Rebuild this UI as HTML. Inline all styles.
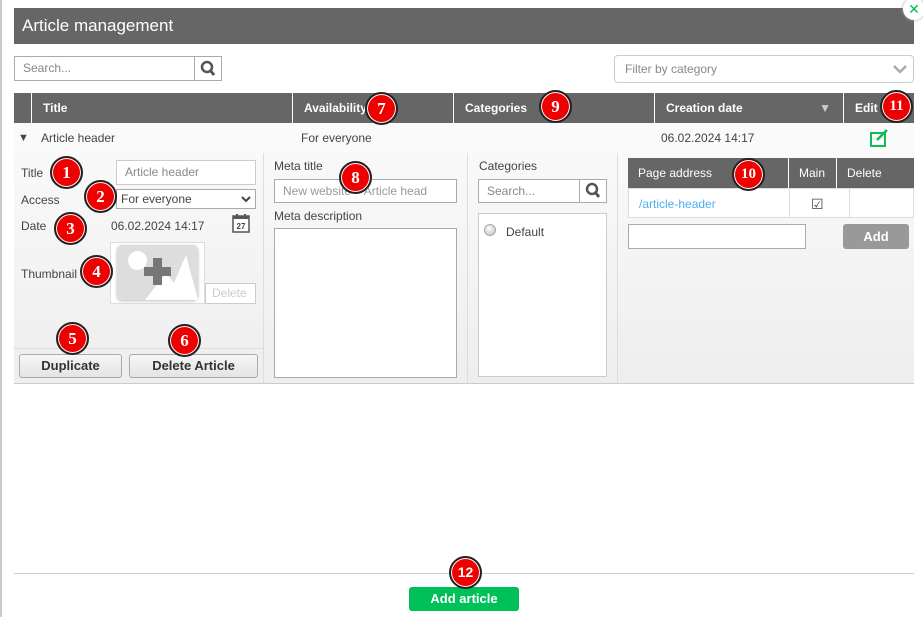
<!DOCTYPE html>
<html><head><style>
*{box-sizing:border-box;margin:0;padding:0}
body{width:923px;height:617px;background:#fff;font-family:"Liberation Sans",sans-serif;position:relative;overflow:hidden;font-size:12px;color:#444}
.a{position:absolute}
.hd{background:#666;color:#fff}
.th{position:absolute;top:0;height:30px;line-height:30px;font-weight:bold;font-size:12px;color:#fff;border-left:1px solid #fff;padding-left:11px}
.b{position:absolute;width:33px;height:33px;border-radius:50%;background:#e00;border:2px solid #222;box-shadow:0 0 0 1px #fff inset;color:#fff;font:bold 17px "Liberation Serif",serif;text-align:center;line-height:29px;z-index:5}
.in{position:absolute;background:#fff;border:1px solid #aaa;color:#888;font-size:12px;padding-left:8px}
.btn{position:absolute;border:1px solid #aaa;border-radius:3px;background:linear-gradient(#f6f6f6,#e4e4e4);font-weight:bold;font-size:13px;color:#333;text-align:center}
</style></head><body>
<div class="a" style="left:0;top:0;width:2px;height:617px;background:#ccc"></div>
<div class="a hd" style="left:14px;top:8px;width:900px;height:36px;font-size:17px;line-height:36px;padding-left:8px">Article management</div>
<div class="a" style="left:903px;top:-2px;width:22px;height:22px;border-radius:50%;background:#fff;box-shadow:0 0 3px #aaa;color:#0b5;font-size:14px;text-align:center;line-height:22px">✕</div>
<div class="in" style="left:14px;top:56px;width:181px;height:25px;line-height:23px">Search...</div>
<div class="in" style="left:194px;top:56px;width:28px;height:25px;padding:0">
<svg width="26" height="23"><circle cx="12" cy="10" r="5" fill="none" stroke="#555" stroke-width="2.5"/><line x1="15" y1="13" x2="19" y2="18" stroke="#555" stroke-width="3"/></svg></div>
<div class="in" style="left:614px;top:55px;width:300px;height:28px;line-height:26px;border-radius:4px;border-color:#ccc;padding-left:10px">Filter by category<svg class="a" style="right:6px;top:8px" width="14" height="10"><polyline points="1,2 7,8 13,2" fill="none" stroke="#aaa" stroke-width="2.5"/></svg></div>
<div class="a hd" style="left:14px;top:93px;width:900px;height:30px">
<div class="th" style="left:17px;width:261px">Title</div>
<div class="th" style="left:278px;width:161px">Availability</div>
<div class="th" style="left:439px;width:201px">Categories</div>
<div class="th" style="left:640px;width:189px">Creation date<span style="position:absolute;right:12px;color:#ccc;font-size:12px">▼</span></div>
<div class="th" style="left:829px;width:71px">Edit</div>
</div>
<div class="a" style="left:14px;top:123px;width:900px;height:30px;background:#fafafa;line-height:30px;font-size:12px;color:#444">
<span class="a" style="left:4px;font-size:11px">▼</span><span class="a" style="left:27px">Article header</span>
<span class="a" style="left:287px">For everyone</span><span class="a" style="left:647px">06.02.2024 14:17</span>
<svg class="a" style="left:855px;top:5px" width="22" height="20"><rect x="2" y="5" width="14" height="13" fill="none" stroke="#1b5" stroke-width="2"/><line x1="8" y1="12" x2="18" y2="2" stroke="#1b5" stroke-width="2.5"/></svg>
</div>
<div class="a" style="left:14px;top:153px;width:900px;height:231px;background:linear-gradient(#f9f9f9,#eee);border-bottom:1px solid #ccc"></div>
<div class="a" style="left:263px;top:153px;width:1px;height:230px;background:#ddd"></div>
<div class="a" style="left:467px;top:153px;width:1px;height:230px;background:#ddd"></div>
<div class="a" style="left:617px;top:153px;width:1px;height:230px;background:#ddd"></div>
<div class="a" style="left:14px;top:348px;width:249px;height:1px;background:#ddd"></div>
<div class="a" style="left:21px;top:166px">Title</div>
<div class="a" style="left:21px;top:193px">Access</div>
<div class="a" style="left:21px;top:219px">Date</div>
<div class="a" style="left:21px;top:267px">Thumbnail</div>
<div class="in" style="left:116px;top:160px;width:140px;height:25px;line-height:23px;border-color:#ccc">Article header</div>
<div class="in" style="left:116px;top:189px;width:140px;height:20px;line-height:18px;color:#444;padding-left:4px">For everyone<svg class="a" style="right:4px;top:6px" width="10" height="7"><polyline points="1,1 5,5 9,1" fill="none" stroke="#444" stroke-width="2"/></svg></div>
<div class="a" style="left:111px;top:219px">06.02.2024 14:17</div>
<svg class="a" style="left:231px;top:212px" width="20" height="22"><rect x="2" y="4" width="16" height="16" fill="#fff" stroke="#555" stroke-width="1.5"/><rect x="2" y="4" width="16" height="3" fill="#555"/><line x1="6" y1="2" x2="6" y2="6" stroke="#555" stroke-width="2"/><line x1="14" y1="2" x2="14" y2="6" stroke="#555" stroke-width="2"/><text x="10" y="17" font-size="8" text-anchor="middle" fill="#444" font-family="Liberation Sans" font-weight="bold">27</text></svg>
<div class="a" style="left:110px;top:242px;width:95px;height:62px;background:#fff;border:1px solid #ddd"></div>
<div class="a" style="left:117px;top:245px;width:81px;height:55px;background:#ddd;border-radius:5px;box-shadow:0 1px 3px #bbb"></div>
<div class="a" style="left:128px;top:251px;width:19px;height:19px;border-radius:50%;background:#fff"></div>
<svg class="a" style="left:144px;top:253px" width="54" height="47"><polygon points="1,47 22,20 30,30 42,2 54,47" fill="#fff"/><path d="M9 5h9v9h9v9h-9v9h-9v-9h-9v-9h9z" fill="#777"/></svg>
<div class="in" style="left:205px;top:283px;width:51px;height:21px;line-height:19px;color:#ccc;border-color:#ccc;padding-left:6px">Delete</div>
<div class="btn" style="left:19px;top:354px;width:103px;height:24px;line-height:22px">Duplicate</div>
<div class="btn" style="left:129px;top:354px;width:129px;height:24px;line-height:22px">Delete Article</div>
<div class="a" style="left:274px;top:159px">Meta title</div>
<div class="in" style="left:274px;top:179px;width:183px;height:24px;line-height:22px;color:#999">New website » Article head</div>
<div class="a" style="left:274px;top:209px">Meta description</div>
<div class="in" style="left:274px;top:228px;width:183px;height:150px"></div>
<div class="a" style="left:479px;top:159px">Categories</div>
<div class="in" style="left:478px;top:179px;width:102px;height:24px;line-height:22px">Search...</div>
<div class="in" style="left:579px;top:179px;width:28px;height:24px;padding:0"><svg width="26" height="22"><circle cx="12" cy="9" r="5" fill="none" stroke="#555" stroke-width="2.5"/><line x1="15" y1="12" x2="19" y2="17" stroke="#555" stroke-width="3"/></svg></div>
<div class="in" style="left:478px;top:213px;width:129px;height:164px;border-color:#ccc"></div>
<div class="a" style="left:484px;top:224px;width:12px;height:12px;border-radius:50%;background:radial-gradient(circle at 40% 35%,#fff,#bbb);border:1px solid #aaa"></div>
<div class="a" style="left:506px;top:225px">Default</div>
<div class="a hd" style="left:628px;top:158px;width:286px;height:30px;font-size:12px;line-height:30px">
<span class="a" style="left:10px">Page address</span>
<div class="a" style="left:160px;top:0;width:1px;height:30px;background:#fff"></div>
<span class="a" style="left:171px">Main</span>
<div class="a" style="left:208px;top:0;width:1px;height:30px;background:#fff"></div>
<span class="a" style="left:219px">Delete</span></div>
<div class="a" style="left:628px;top:188px;width:286px;height:30px;background:#fff;border:1px solid #ddd;line-height:30px">
<span class="a" style="left:10px;color:#4ab0f0">/article-header</span>
<div class="a" style="left:160px;top:0;width:1px;height:29px;background:#ddd"></div>
<span class="a" style="left:182px;top:0;font-size:14px;color:#444">☑</span>
<div class="a" style="left:220px;top:0;width:1px;height:29px;background:#ddd"></div></div>
<div class="in" style="left:628px;top:224px;width:178px;height:25px"></div>
<div class="a" style="left:843px;top:224px;width:66px;height:25px;background:#999;border-radius:3px;color:#fff;font-weight:bold;font-size:13px;text-align:center;line-height:25px">Add</div>
<div class="a" style="left:14px;top:573px;width:900px;height:1px;background:#ccc"></div>
<div class="a" style="left:409px;top:587px;width:110px;height:24px;background:#00c05a;border-radius:3px;color:#fff;font-weight:bold;font-size:13px;text-align:center;line-height:24px">Add article</div>
<div class="b" style="left:50px;top:156px">1</div>
<div class="b" style="left:84px;top:180px">2</div>
<div class="b" style="left:54px;top:212px">3</div>
<div class="b" style="left:80px;top:255px">4</div>
<div class="b" style="left:56px;top:322px">5</div>
<div class="b" style="left:168px;top:324px">6</div>
<div class="b" style="left:365px;top:92px">7</div>
<div class="b" style="left:339px;top:161px">8</div>
<div class="b" style="left:539px;top:90px">9</div>
<div class="b" style="left:732px;top:158px;font-size:15px">10</div>
<div class="b" style="left:880px;top:90px;font-size:15px">11</div>
<div class="b" style="left:449px;top:556px;font-family:'Liberation Sans';font-size:14px">12</div>
</body></html>
